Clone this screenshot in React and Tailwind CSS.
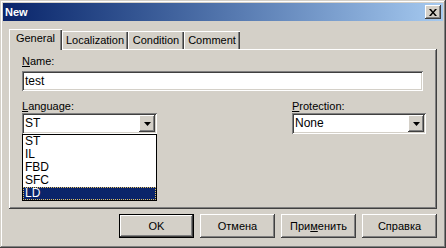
const RAISED =
  'shadow-[inset_-1px_-1px_0_#404040,inset_1px_1px_0_#ffffff,inset_-2px_-2px_0_#808080,inset_2px_2px_0_#d4d0c8]'
const SUNKEN =
  'shadow-[inset_1px_1px_0_#808080,inset_-1px_-1px_0_#ffffff,inset_2px_2px_0_#404040,inset_-2px_-2px_0_#d4d0c8]'

const TABS = [
  { label: 'General', w: 'w-[53px]', active: true },
  { label: 'Localization', w: 'w-[66px]' },
  { label: 'Condition', w: 'w-[56px]' },
  { label: 'Comment', w: 'w-[56px]' },
]

const LANGS = ['ST', 'IL', 'FBD', 'SFC', 'LD']

function Arrow() {
  return (
    <div className={`w-[16px] h-full bg-[#d4d0c8] flex items-center justify-center ${RAISED}`}>
      <svg width="7" height="4" viewBox="0 0 7 4">
        <path d="M0 0h7L3.5 4z" fill="#000" />
      </svg>
    </div>
  )
}

function Combo({ value, w }) {
  return (
    <div className={`${w} h-[21px] bg-white p-[2px] flex items-stretch ${SUNKEN}`}>
      <span className="flex-1 pl-[1px] text-[12px] leading-[17px]">{value}</span>
      <Arrow />
    </div>
  )
}

function Button({ children, def }) {
  return (
    <button
      className={`w-[75px] h-[24px] bg-[#d4d0c8] text-[11px] text-black flex items-center justify-center ${
        def
          ? 'border border-black shadow-[inset_-1px_-1px_0_#404040,inset_1px_1px_0_#ffffff,inset_-2px_-2px_0_#808080]'
          : RAISED
      }`}
    >
      {children}
    </button>
  )
}

export default function App() {
  return (
    <div
      className="w-[446px] h-[248px] bg-[#d4d0c8] p-[3px] flex flex-col text-black shadow-[inset_-1px_-1px_0_#404040,inset_1px_1px_0_#d4d0c8,inset_-2px_-2px_0_#808080,inset_2px_2px_0_#ffffff]"
      style={{ fontFamily: '"Liberation Sans", Arial, sans-serif' }}
    >
      {/* title bar */}
      <div className="h-[18px] flex items-center justify-between pl-[2px] pr-[2px] bg-linear-to-r from-[#0a246a] to-[#a6caf0]">
        <span className="text-white font-bold text-[11px] leading-none">New</span>
        <div className={`w-[16px] h-[14px] bg-[#d4d0c8] flex items-center justify-center ${RAISED}`}>
          <svg width="8" height="7" viewBox="0 0 8 7">
            <path d="M0 0h2l2 2.5L6 0h2L5 3.5 8 7H6L4 4.5 2 7H0l3-3.5z" fill="#000" />
          </svg>
        </div>
      </div>

      <div className="flex-1 px-[6px] pt-[8px]">
        {/* tabs */}
        <div className="flex items-end h-[20px] relative z-10">
          {TABS.map((t) => (
            <div
              key={t.label}
              className={`${t.w} flex items-center justify-center text-[11px] bg-[#d4d0c8] shadow-[inset_1px_0_0_#ffffff,inset_0_1px_0_#ffffff,inset_-1px_0_0_#404040,inset_-2px_0_0_#808080] ${
                t.active ? 'h-[21px] -mb-[1px] pb-[3px]' : 'h-[18px] pt-[1px]'
              }`}
            >
              {t.label}
            </div>
          ))}
        </div>

        {/* panel */}
        <div className={`w-[428px] h-[160px] px-[13px] pt-[6px] ${RAISED}`}>
          <div className="text-[11px] leading-[13px]">
            <span className="underline">N</span>ame:
          </div>
          <div className={`mt-[3px] w-[401px] h-[20px] bg-white px-[3px] text-[12px] leading-[20px] ${SUNKEN}`}>
            test
          </div>

          <div className="flex mt-[9px]">
            <div className="w-[135px] relative">
              <div className="text-[11px] leading-[13px]">
                <span className="underline">L</span>anguage:
              </div>
              <Combo value="ST" w="w-[135px]" />
              <ul className="absolute left-0 top-[34px] w-[135px] bg-white border border-black text-[12px] leading-[13px] z-20">
                {LANGS.map((l) => (
                  <li
                    key={l}
                    className={`h-[13px] pl-[2px] ${
                      l === 'LD'
                        ? 'bg-[#0a246a] text-white outline-1 outline-dotted outline-[#e0c060] -outline-offset-1'
                        : ''
                    }`}
                  >
                    {l}
                  </li>
                ))}
              </ul>
            </div>
            <div className="w-[134px] ml-[135px]">
              <div className="text-[11px] leading-[13px]">
                <span className="underline">P</span>rotection:
              </div>
              <Combo value="None" w="w-[134px]" />
            </div>
          </div>
        </div>

        {/* buttons */}
        <div className="flex justify-end gap-[6px] mt-[5px]">
          <Button def>OK</Button>
          <Button>Отмена</Button>
          <Button>
            При<span className="underline">м</span>енить
          </Button>
          <Button>Справка</Button>
        </div>
      </div>
    </div>
  )
}
